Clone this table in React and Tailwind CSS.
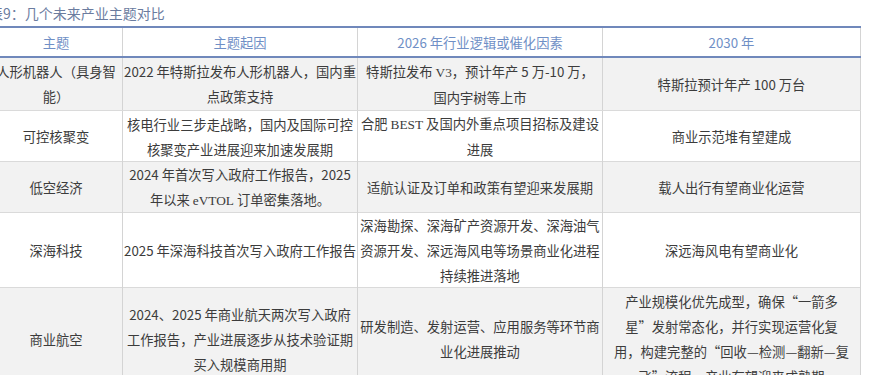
import React from "react";

const rows = [
    {
        h: "h-[53px]",
        bg: "bg-[#f2f2f2]",
        cells: [
            ["人形机器人（具身智", "能）"],
            ["2022 年特斯拉发布人形机器人，国内重", "点政策支持"],
            [
                <>
                    特斯拉发布 <span className="font-['Liberation_Serif']">V3</span>，预计年产 5 万-10 万，
                </>,
                "国内宇树等上市",
            ],
            ["特斯拉预计年产 100 万台"],
        ],
    },
    {
        h: "h-[51px]",
        bg: "bg-white",
        cells: [
            ["可控核聚变"],
            ["核电行业三步走战略，国内及国际可控", "核聚变产业进展迎来加速发展期"],
            [
                <>
                    合肥 <span className="font-['Liberation_Serif']">BEST</span> 及国内外重点项目招标及建设
                </>,
                "进展",
            ],
            ["商业示范堆有望建成"],
        ],
    },
    {
        h: "h-[51px]",
        bg: "bg-[#f2f2f2]",
        cells: [
            ["低空经济"],
            [
                "2024 年首次写入政府工作报告，2025",
                <>
                    年以来 <span className="font-['Liberation_Serif']">eVTOL</span> 订单密集落地。
                </>,
            ],
            ["适航认证及订单和政策有望迎来发展期"],
            ["载人出行有望商业化运营"],
        ],
    },
    {
        h: "h-[75px]",
        bg: "bg-white",
        cells: [
            ["深海科技"],
            ["2025 年深海科技首次写入政府工作报告"],
            [
                "深海勘探、深海矿产资源开发、深海油气",
                "资源开发、深远海风电等场景商业化进程",
                "持续推进落地",
            ],
            ["深远海风电有望商业化"],
        ],
    },
    {
        h: "h-[103px]",
        bg: "bg-[#f2f2f2]",
        cells: [
            ["商业航空"],
            [
                "2024、2025 年商业航天两次写入政府",
                "工作报告，产业进展逐步从技术验证期",
                "买入规模商用期",
            ],
            ["研发制造、发射运营、应用服务等环节商", "业化进展推动"],
            [
                "产业规模化优先成型，确保“一箭多",
                "星”发射常态化，并行实现运营化复",
                "用，构建完整的“回收—检测—翻新—复",
                "飞”流程，产业有望迎来成熟期",
            ],
        ],
    },
];

const headers = ["主题", "主题起因", "2026 年行业逻辑或催化因素", "2030 年"];

const cols = "grid grid-cols-[133px_235px_245px_258px]";

const App = () => {
    return (
        <div className="w-[879px] h-[375px] overflow-hidden bg-white font-['Noto_Sans_CJK_SC',sans-serif] text-[13.3px]">
            <div className="h-[26px] ml-[-11px] flex items-center text-[14px] text-[#6b7c9f]">
                表9：几个未来产业主题对比
            </div>
            <div className="w-[871px] ml-[-10px] border-t-2 border-[#7088bb]">
                <div className={`${cols} h-[30px] border-b-2 border-[#7088bb] text-[#6f8fc6]`}>
                    {headers.map((t, i) => (
                        <div
                            key={i}
                            className="flex items-center justify-center pt-px border-r border-[#d4d4d4]"
                        >
                            {t}
                        </div>
                    ))}
                </div>
                {rows.map((row, ri) => (
                    <div
                        key={ri}
                        className={`${cols} ${row.h} ${row.bg} border-b border-[#dadada] text-[#3c3c3c]`}
                    >
                        {row.cells.map((lines, ci) => (
                            <div
                                key={ci}
                                className="flex flex-col items-center justify-center border-r border-[#d4d4d4] leading-[25px] text-center"
                            >
                                {lines.map((l, li) => (
                                    <div key={li} className="whitespace-nowrap">
                                        {l}
                                    </div>
                                ))}
                            </div>
                        ))}
                    </div>
                ))}
            </div>
        </div>
    );
};

export default App;
